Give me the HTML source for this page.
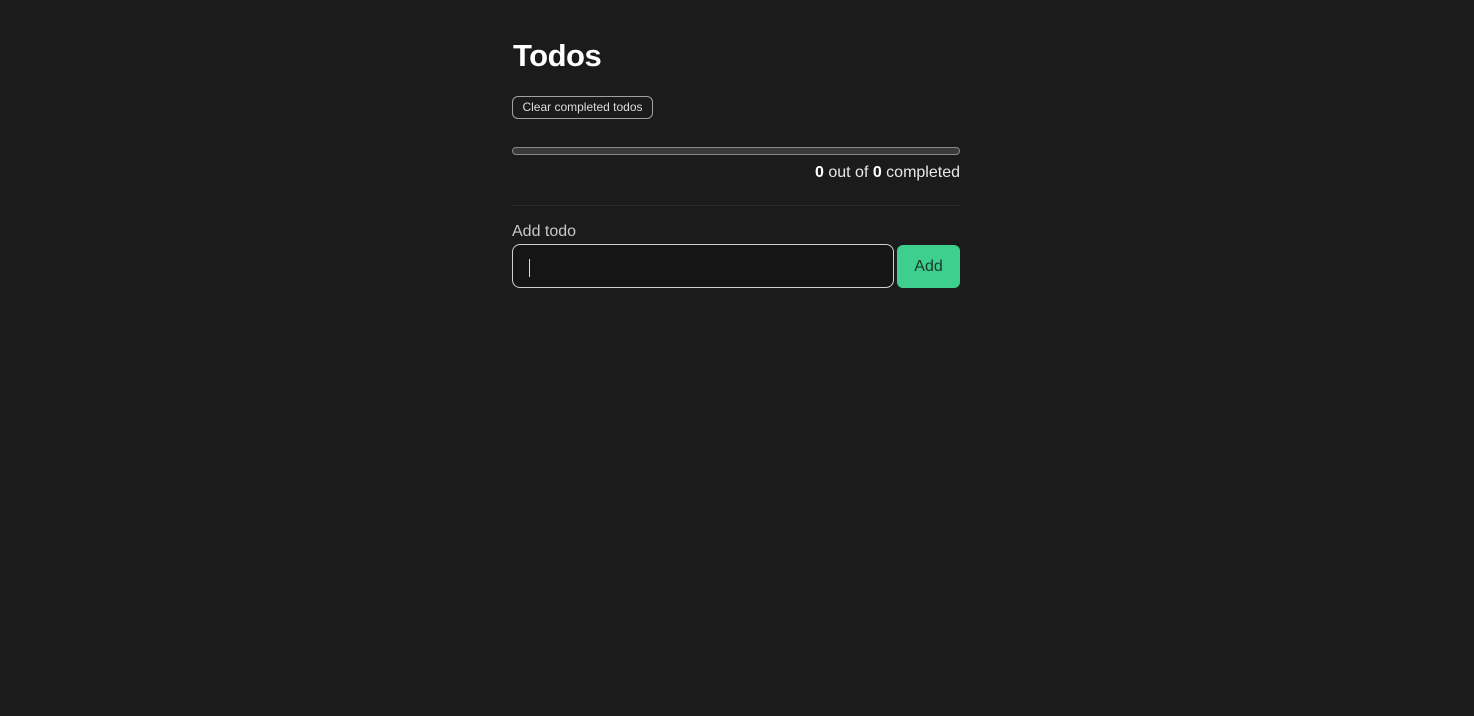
<!DOCTYPE html>
<html><head><meta charset="utf-8"><style>
html,body{margin:0;background:#1b1b1b;width:1474px;height:716px;overflow:hidden;font-family:"Liberation Sans",sans-serif;color:#e8e8e8}
.wrap{position:absolute;left:512px;top:0;width:448px}
h1{position:absolute;top:38px;left:1px;margin:0;font-size:31px;font-weight:bold;color:#fff;letter-spacing:-0.5px}
.clear{position:absolute;top:96px;left:0;height:21px;width:139px;border:1px solid #a0a0a0;border-radius:6px;font-size:12px;line-height:21px;text-align:center;color:#ddd;box-sizing:content-box}
.bar{position:absolute;top:147px;left:0;width:446px;height:6px;border:1px solid #888;border-radius:4px;background:#3a3a3a}
.count{position:absolute;top:164px;right:0;font-size:16px;color:#e8e8e8}
.count b{color:#fff}
.hr{position:absolute;top:205px;left:0;width:448px;height:1px;background:#2c2c2c}
.lbl{position:absolute;top:223px;left:0;font-size:16px;color:#c8c8c8}
.inp{position:absolute;top:244px;left:0;width:380px;height:42px;border:1.5px solid #d0d0d0;border-radius:8px;background:#151515}
.caret{position:absolute;left:16px;top:14px;width:1px;height:18px;background:#ddd}
.add{position:absolute;top:245px;left:385px;width:63px;height:43px;background:#3ecf8e;border-radius:6px;color:#153a29;font-size:16px;line-height:43px;text-align:center}
</style></head><body><div class="wrap">
<h1>Todos</h1>
<div class="clear">Clear completed todos</div>
<div class="bar"></div>
<div class="count"><b>0</b> out of <b>0</b> completed</div>
<div class="hr"></div>
<div class="lbl">Add todo</div>
<div class="inp"><div class="caret"></div></div>
<div class="add">Add</div>
</div></body></html>
